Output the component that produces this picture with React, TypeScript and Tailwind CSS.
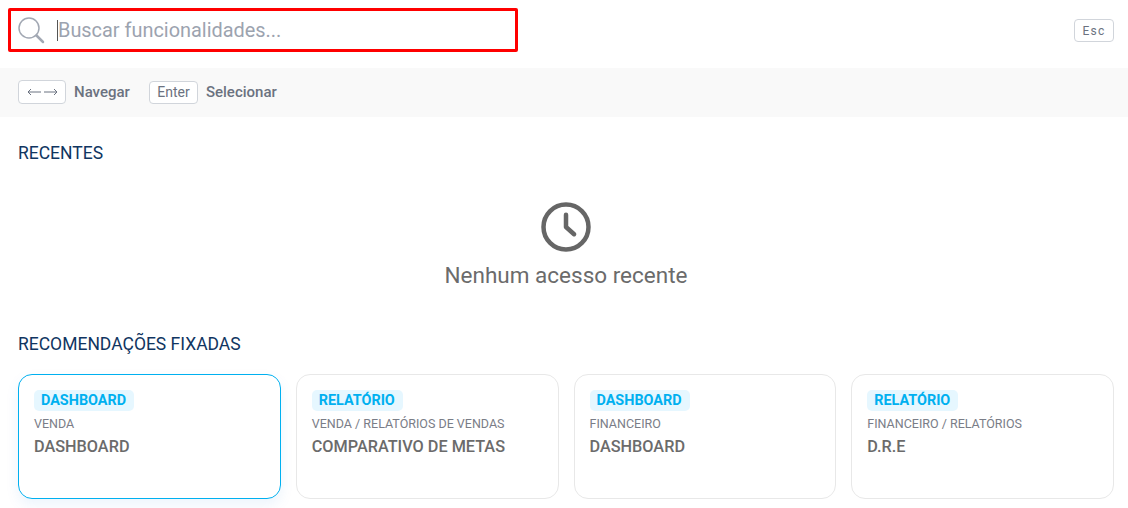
const pinned = [
  { tag: "DASHBOARD", path: "VENDA", title: "DASHBOARD", active: true },
  { tag: "RELATÓRIO", path: "VENDA / RELATÓRIOS DE VENDAS", title: "COMPARATIVO DE METAS" },
  { tag: "DASHBOARD", path: "FINANCEIRO", title: "DASHBOARD" },
  { tag: "RELATÓRIO", path: "FINANCEIRO / RELATÓRIOS", title: "D.R.E" },
];

export default function App() {
  return (
    <div className="h-[508px] w-[1128px] overflow-hidden bg-white font-['Roboto',sans-serif]">
      <header className="flex h-[68px] items-start justify-between pl-2 pr-[14px] pt-[8px]">
        <div className="flex h-[44px] w-[510px] items-center rounded-[2px] border-[3px] border-[#ff0000] pl-[6px]">
          <svg width="28" height="28" viewBox="0 0 28 28" fill="none" className="shrink-0 text-[#a2a8b3]">
            <circle cx="12" cy="12" r="10" stroke="currentColor" strokeWidth="1.5" />
            <path d="M19.5 19.5L26 26" stroke="currentColor" strokeWidth="2.5" strokeLinecap="round" />
          </svg>
          <div className="ml-[12px] flex items-center">
            <span className="h-[21px] w-px bg-[#555]" />
            <span className="pt-px text-[19.9px] leading-none text-[#9ca3af]">Buscar funcionalidades...</span>
          </div>
        </div>
        <kbd className="mt-[11px] flex h-[23px] w-[40px] items-center justify-center rounded-[4px] border border-[#d1d5db] font-['Roboto',sans-serif] text-xs tracking-[1.2px] text-[#6b7280]">
          Esc
        </kbd>
      </header>

      <div className="flex h-[49px] items-center bg-[#f9f9f9] pb-px pl-[18px]">
        <kbd className="flex h-[24px] w-[48px] items-center justify-center gap-[3px] rounded-[4px] border border-[#d1d5db] bg-white text-[#6b7280]">
          <svg width="14" height="8" viewBox="0 0 14 8" fill="none" stroke="currentColor" strokeWidth="1">
            <path d="M14 4H1M4 1L1 4L4 7" />
          </svg>
          <svg width="14" height="8" viewBox="0 0 14 8" fill="none" stroke="currentColor" strokeWidth="1">
            <path d="M0 4H13M10 1L13 4L10 7" />
          </svg>
        </kbd>
        <span className="ml-2 text-[15px] font-medium text-[#6b7280]">Navegar</span>
        <kbd className="ml-[19px] flex h-[23px] w-[49px] items-center justify-center rounded-[4px] border border-[#d1d5db] bg-white font-['Roboto',sans-serif] text-sm font-normal text-[#6b7280]">
          Enter
        </kbd>
        <span className="ml-2 text-[15px] font-medium text-[#6b7280]">Selecionar</span>
      </div>

      <section className="pl-[18px] pr-[14px] pt-[25px]">
        <h2 className="text-[17.5px] leading-[22px] text-[#103561]">RECENTES</h2>
        <div className="mt-[36px] flex flex-col items-center">
          <svg width="54" height="54" viewBox="0 0 24 24" fill="none" stroke="#666666" strokeWidth="2" strokeLinecap="round" strokeLinejoin="round">
            <circle cx="12" cy="12" r="10" />
            <path d="M12 6.5V12L15.6 15.2" />
          </svg>
          <p className="mt-[6px] text-[22.5px] leading-[30px] text-[#6b6b6b]">Nenhum acesso recente</p>
        </div>
      </section>

      <section className="pl-[18px] pr-[14px] pt-[43px]">
        <h2 className="text-[17.5px] leading-[22px] text-[#103561]">RECOMENDAÇÕES FIXADAS</h2>
        <div className="mt-[19px] grid grid-cols-4 gap-[15px]">
          {pinned.map((item) => (
            <div
              key={item.tag + item.path}
              className={
                item.active
                  ? "h-[125px] rounded-[14px] border border-[#00b0f0] bg-white px-[15px] pt-[13px] shadow-[0_6px_14px_rgba(0,120,220,0.08)]"
                  : "h-[125px] rounded-[14px] border border-[#e8e8e8] bg-white px-[15px] pt-[13px]"
              }
            >
              <span className="inline-block rounded-[5px] bg-[#e6f7ff] pl-[7px] pr-[8px] text-[14.4px] leading-[21px] font-bold text-[#00b0f0]">
                {item.tag}
              </span>
              <div className="mt-[3px] text-[12.5px] leading-[18px] text-[#7a7d87]">{item.path}</div>
              <div className="mt-[3px] text-[16.25px] leading-[22px] font-medium text-[#6b6b6b]">{item.title}</div>
            </div>
          ))}
        </div>
      </section>
    </div>
  );
}
